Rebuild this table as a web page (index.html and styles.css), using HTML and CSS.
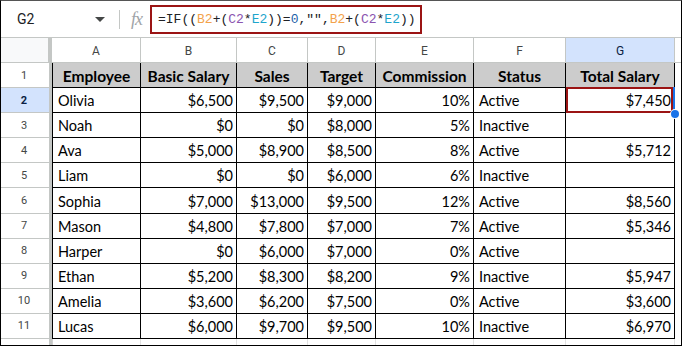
FILE: index.html
```html
<!DOCTYPE html>
<html>
<head>
<meta charset="utf-8">
<link rel="stylesheet" href="styles.css">
</head>
<body>
<div class="frame">
  <div class="fbar">
    <div class="namebox">G2</div>
    <div class="caret"></div>
    <div class="sep"></div>
    <div class="fx">fx</div>
    <div class="formula">=IF((<span class="rb">B2</span>+(<span class="rc">C2</span>*<span class="re">E2</span>))=<span class="num">0</span>,"",<span class="rb">B2</span>+(<span class="rc">C2</span>*<span class="re">E2</span>))</div>
  </div>
  <div class="grid">
    <div class="corner"></div>
    <div class="ch">A</div><div class="ch">B</div><div class="ch">C</div><div class="ch">D</div><div class="ch">E</div><div class="ch">F</div><div class="ch chsel">G</div><div class="ch chfill"></div>

    <div class="rh">1</div>
    <div class="c hd first">Employee</div><div class="c hd">Basic Salary</div><div class="c hd">Sales</div><div class="c hd">Target</div><div class="c hd">Commission</div><div class="c hd">Status</div><div class="c hd">Total Salary</div><div class="fill"></div>

    <div class="rh rhsel">2</div>
    <div class="c first">Olivia</div><div class="c r">$6,500</div><div class="c r">$9,500</div><div class="c r">$9,000</div><div class="c r">10%</div><div class="c">Active</div><div class="c r gsel">$7,450<span class="sel"></span><span class="handle"></span></div><div class="fill"></div>

    <div class="rh">3</div>
    <div class="c first">Noah</div><div class="c r">$0</div><div class="c r">$0</div><div class="c r">$8,000</div><div class="c r">5%</div><div class="c">Inactive</div><div class="c r"></div><div class="fill"></div>

    <div class="rh">4</div>
    <div class="c first">Ava</div><div class="c r">$5,000</div><div class="c r">$8,900</div><div class="c r">$8,500</div><div class="c r">8%</div><div class="c">Active</div><div class="c r">$5,712</div><div class="fill"></div>

    <div class="rh">5</div>
    <div class="c first">Liam</div><div class="c r">$0</div><div class="c r">$0</div><div class="c r">$6,000</div><div class="c r">6%</div><div class="c">Inactive</div><div class="c r"></div><div class="fill"></div>

    <div class="rh">6</div>
    <div class="c first">Sophia</div><div class="c r">$7,000</div><div class="c r">$13,000</div><div class="c r">$9,500</div><div class="c r">12%</div><div class="c">Active</div><div class="c r">$8,560</div><div class="fill"></div>

    <div class="rh">7</div>
    <div class="c first">Mason</div><div class="c r">$4,800</div><div class="c r">$7,800</div><div class="c r">$7,000</div><div class="c r">7%</div><div class="c">Active</div><div class="c r">$5,346</div><div class="fill"></div>

    <div class="rh">8</div>
    <div class="c first">Harper</div><div class="c r">$0</div><div class="c r">$6,000</div><div class="c r">$7,000</div><div class="c r">0%</div><div class="c">Active</div><div class="c r"></div><div class="fill"></div>

    <div class="rh">9</div>
    <div class="c first">Ethan</div><div class="c r">$5,200</div><div class="c r">$8,300</div><div class="c r">$8,200</div><div class="c r">9%</div><div class="c">Inactive</div><div class="c r">$5,947</div><div class="fill"></div>

    <div class="rh">10</div>
    <div class="c first">Amelia</div><div class="c r">$3,600</div><div class="c r">$6,200</div><div class="c r">$7,500</div><div class="c r">0%</div><div class="c">Active</div><div class="c r">$3,600</div><div class="fill"></div>

    <div class="rh">11</div>
    <div class="c first">Lucas</div><div class="c r">$6,000</div><div class="c r">$9,700</div><div class="c r">$9,500</div><div class="c r">10%</div><div class="c">Inactive</div><div class="c r">$6,970</div><div class="fill"></div>

    <div class="rh rhlast">12</div>
    <div class="e first"></div><div class="e"></div><div class="e"></div><div class="e"></div><div class="e"></div><div class="e"></div><div class="e"></div><div class="fill"></div>
  </div>
</div>
</body>
</html>
```

FILE: styles.css
```css
html, body {
  margin: 0;
  padding: 0;
  background: #ffffff;
}
.frame {
  width: 682px;
  height: 346px;
  border: 1px solid #000;
  border-top-color: #555;
  box-sizing: border-box;
  overflow: hidden;
  background: #fff;
}
.fbar {
  height: 37px;
  box-sizing: border-box;
  border-bottom: 1px solid #c4c7c5;
  display: flex;
  align-items: center;
  font-family: Roboto, "Liberation Sans", sans-serif;
}
.namebox {
  width: 78px;
  padding-left: 16px;
  font-size: 14px;
  color: #202124;
}
.caret {
  width: 0;
  height: 0;
  border-left: 5px solid transparent;
  border-right: 5px solid transparent;
  border-top: 5px solid #444746;
  margin-top: 1px;
}
.sep {
  width: 1px;
  height: 19px;
  background: #c4c7c5;
  margin-left: 14px;
}
.fx {
  margin-left: 11px;
  font-family: "Liberation Serif", serif;
  font-style: italic;
  font-size: 18px;
  color: #a0a4a8;
  letter-spacing: -1px;
  width: 19px;
}
.formula {
  width: 272px;
  height: 29px;
  box-sizing: border-box;
  border: 2px solid #9b1414;
  padding-left: 6px;
  display: flex;
  align-items: center;
  font-family: "Liberation Mono", monospace;
  font-size: 13px;
  color: #202124;
  white-space: nowrap;
}
.rb { color: #f3a24b; }
.rc { color: #8b54b0; }
.re { color: #1ea5cc; }
.num { color: #1c5fa8; }

.grid {
  display: grid;
  grid-template-columns: 51px 89px 96px 71px 68px 98px 92px 109px 1fr;
  grid-template-rows: 25px repeat(11, 25.1px) 25px;
  font-family: Lato, "Liberation Sans", sans-serif;
  font-size: 14.5px;
  color: #000;
}
.corner {
  background: #f8f9fa;
  border-right: 4px solid #c4c7c5;
  border-bottom: 1px solid #c4c7c5;
  box-sizing: border-box;
}
.ch {
  box-sizing: border-box;
  border-right: 1px solid #c4c7c5;
  border-bottom: 1px solid #c4c7c5;
  display: flex;
  align-items: center;
  justify-content: center;
  font-family: Roboto, "Liberation Sans", sans-serif;
  font-size: 12px;
  color: #444746;
  padding-top: 1px;
}
.chsel {
  background: #d3e3fd;
  color: #0b1f44;
}
.chfill {
  border-right: none;
}
.rh {
  box-sizing: border-box;
  border-right: 3px solid #c4c7c5;
  border-bottom: 1px solid #c4c7c5;
  display: flex;
  align-items: center;
  justify-content: center;
  font-family: Roboto, "Liberation Sans", sans-serif;
  font-size: 11px;
  color: #444746;
  padding-right: 2px;
}
.rhlast {
  align-items: flex-start;
  padding-top: 4px;
}
.rhsel {
  background: #d3e3fd;
  font-weight: bold;
  color: #0b1f44;
}
.c {
  box-sizing: border-box;
  border-right: 1px solid #000;
  border-bottom: 1px solid #000;
  display: flex;
  align-items: center;
  padding: 1px 4px 0 5px;
  white-space: nowrap;
}
.c.first, .e.first {
  border-left: 1px solid #000;
}
.e.first {
  border-left-color: #d0d0d0;
}
.c.r {
  justify-content: flex-end;
  padding-right: 3px;
}
.c.hd {
  background: #cccccc;
  font-weight: bold;
  font-size: 15.5px;
  justify-content: center;
  padding: 1px 0 0 0;
}
.e {
  box-sizing: border-box;
  border-right: 1px solid #e2e2e2;
}
.fill {
  background: #fff;
}
.gsel {
  position: relative;
}
.sel {
  position: absolute;
  left: 0;
  top: -1px;
  right: 1px;
  bottom: -1px;
  border: 2px solid #9b1414;
  box-shadow: 2px 0 0 #1a73e8;
  pointer-events: none;
}
.handle {
  position: absolute;
  right: -5px;
  bottom: -6px;
  width: 8px;
  height: 8px;
  border-radius: 50%;
  background: #1a73e8;
  box-shadow: 0 0 0 1px #fff;
}
```
